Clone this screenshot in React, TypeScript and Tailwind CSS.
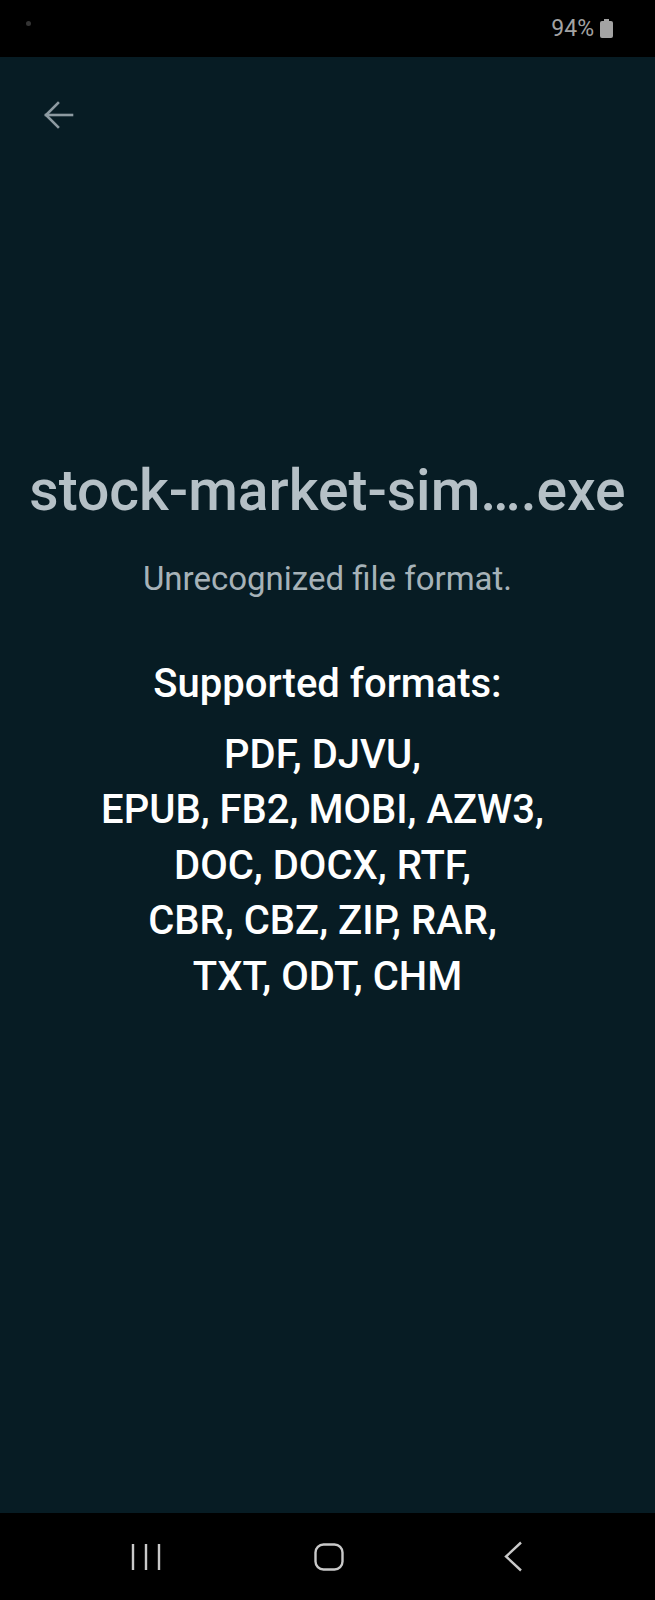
import React from 'react';

const formats = [
  'PDF, DJVU, ',
  'EPUB, FB2, MOBI, AZW3, ',
  'DOC, DOCX, RTF, ',
  'CBR, CBZ, ZIP, RAR, ',
  'TXT, ODT, CHM',
];

export default function App() {
  return (
    <div className="flex flex-col h-[1600px] w-full bg-[#071c24] font-['Roboto','Liberation_Sans',sans-serif]">
      {/* Status bar */}
      <div className="h-[57px] bg-black flex items-center justify-between pl-[26px] pr-[42px] shrink-0">
        <div className="w-[5px] h-[5px] rounded-full bg-[#343434] -mt-[10px]" />
        <div className="flex items-center gap-[6px] text-[#a3a3a3] text-[23px] leading-none">
          <span>94%</span>
          <div className="w-[13px] h-[17px] rounded-[2px] bg-[#a3a3a3] relative mt-[2px]">
            <div className="absolute -top-[2px] left-[4px] w-[5px] h-[2px] bg-[#a3a3a3]" />
          </div>
        </div>
      </div>

      {/* Main */}
      <div className="flex-1 flex flex-col">
        <div className="h-[116px] pl-[43px] pt-[43px]">
          <svg width="31" height="30" viewBox="0 0 31 30" fill="none" stroke="#8d9aa1" strokeWidth="2.6" strokeLinecap="square">
            <path d="M3 15h26" />
            <path d="M15 3L3 15l12 12" />
          </svg>
        </div>

        <div className="flex flex-col items-center text-center mt-[285px]">
          <h1 className="text-[57px] leading-[66px] font-medium text-[#b5c0c6] whitespace-nowrap">stock-market-sim….exe</h1>
          <p className="mt-[35px] text-[33px] leading-[40px] text-[#a6b2b8]">Unrecognized file format.</p>
          <p className="mt-[61px] text-[40px] leading-[48px] font-medium text-white">Supported formats:</p>
          <div className="mt-[19px] flex flex-col items-center">
            {formats.map((line) => (
              <div key={line} className="text-[40px] leading-[55.4px] font-medium text-white whitespace-pre">
                {line}
              </div>
            ))}
          </div>
        </div>
      </div>

      {/* Nav bar */}
      <div className="h-[87px] bg-black flex items-center pl-[131px] shrink-0">
        <svg width="30" height="28" viewBox="0 0 30 28" fill="none" stroke="#c9c9c9" strokeWidth="2.4">
          <path d="M2 1v26M15 1v26M28 1v26" />
        </svg>
        <svg className="ml-[153px]" width="30" height="28" viewBox="0 0 30 28" fill="none" stroke="#c9c9c9" strokeWidth="2.4">
          <rect x="1.5" y="1.5" width="27" height="25" rx="8" />
        </svg>
        <svg className="ml-[160px]" width="19" height="31" viewBox="0 0 19 31" fill="none" stroke="#c9c9c9" strokeWidth="2.4">
          <path d="M17 1.5L2 15.5l15 14" />
        </svg>
      </div>
    </div>
  );
}
